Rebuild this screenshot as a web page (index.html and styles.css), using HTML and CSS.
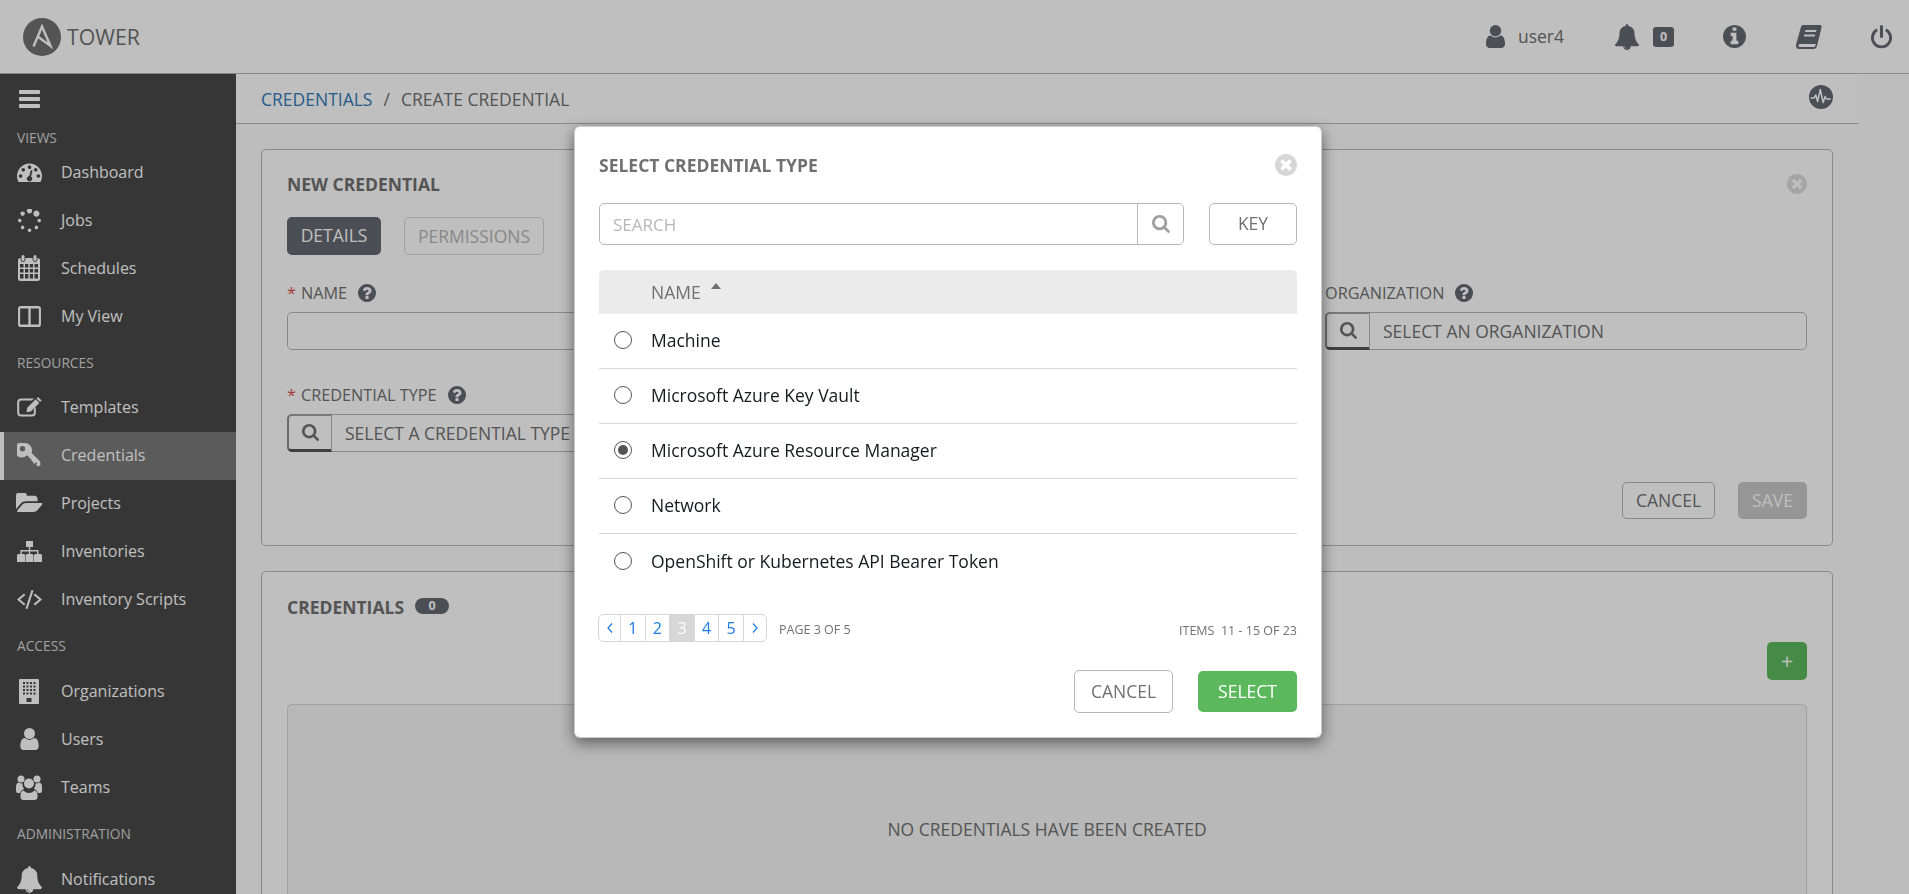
FILE: index.html
```html
<!DOCTYPE html>
<html lang="en">
<head>
<meta charset="utf-8">
<title>Tower - Create Credential</title>
<link rel="stylesheet" href="styles.css">
</head>
<body>
<svg class="sprite" aria-hidden="true">
  <symbol id="i-user" viewBox="256 128 1280 1536"><path d="M1536 1399q0 109-62.500 187t-150.500 78h-854q-88 0-150.500-78t-62.500-187q0-85 8.500-160.500t31.500-152 58.500-131 94-89 134.500-34.500q131 128 313 128t313-128q76 0 134.500 34.500t94 89 58.500 131 31.500 152 8.500 160.500zm-256-887q0 159-112.500 271.500t-271.500 112.500-271.500-112.500-112.500-271.500 112.500-271.500 271.500-112.500 271.500 112.500 112.500 271.500z"/></symbol>
  <symbol id="i-bell" viewBox="0 0 1792 1792"><path d="M912 1696q0-16-16-16-59 0-101.500-42.500t-42.500-101.500q0-16-16-16t-16 16q0 73 51.500 124.500t124.500 51.500q16 0 16-16zm816-288q0 52-38 90t-90 38h-448q0 106-75 181t-181 75-181-75-75-181h-448q-52 0-90-38t-38-90q50-42 91-88t85-119.500 74.500-158.500 50-206 19.500-260q0-152 117-282.500t307-158.500q-8-19-8-39 0-40 28-68t68-28 68 28 28 68q0 20-8 39 190 28 307 158.500t117 282.500q0 139 19.500 260t50 206 74.500 158.500 85 119.500 91 88z"/></symbol>
  <symbol id="i-search" viewBox="64 128 1664 1664"><path d="M1216 832q0-185-131.500-316.500t-316.500-131.500-316.500 131.500-131.500 316.500 131.500 316.500 316.500 131.500 316.500-131.500 131.500-316.500zm512 832q0 52-38 90t-90 38q-54 0-90-38l-343-342q-179 124-399 124-143 0-273.500-55.500t-225-150-150-225-55.500-273.500 55.500-273.500 150-225 225-150 273.500-55.500 273.500 55.500 225 150 150 225 55.500 273.500q0 220-124 399l343 343q37 37 37 90z"/></symbol>
  <symbol id="i-info" viewBox="128 128 1536 1536"><path d="M1152 1376v-160q0-14-9-23t-23-9h-96v-512q0-14-9-23t-23-9h-320q-14 0-23 9t-9 23v160q0 14 9 23t23 9h96v320h-96q-14 0-23 9t-9 23v160q0 14 9 23t23 9h448q14 0 23-9t9-23zm-128-896v-160q0-14-9-23t-23-9h-192q-14 0-23 9t-9 23v160q0 14 9 23t23 9h192q14 0 23-9t9-23zm640 416q0 209-103 385.500t-279.500 279.500-385.500 103-385.500-103-279.500-279.500-103-385.500 103-385.500 279.500-279.500 385.500-103 385.500 103 279.500 279.500 103 385.500z"/></symbol>
  <symbol id="i-help" viewBox="128 128 1536 1536"><path d="M1024 1376v-192q0-14-9-23t-23-9h-192q-14 0-23 9t-9 23v192q0 14 9 23t23 9h192q14 0 23-9t9-23zm256-672q0-88-55.500-163t-138.500-116-170-41q-243 0-371 213-15 24 8 42l132 100q7 6 19 6 16 0 25-12 53-68 86-92 34-24 86-24 48 0 85.500 26t37.500 59q0 38-20 61t-68 45q-63 28-115.500 86.500t-52.500 125.500v36q0 14 9 23t23 9h192q14 0 23-9t9-23q0-19 21.500-49.500t54.500-49.500q32-18 49-28.500t46-35 44.500-48 28-60.500 12.500-81zm384 192q0 209-103 385.500t-279.500 279.500-385.500 103-385.500-103-279.500-279.500-103-385.500 103-385.500 279.500-279.500 385.500-103 385.500 103 279.500 279.500 103 385.500z"/></symbol>
  <symbol id="i-close" viewBox="128 128 1536 1536"><path d="M1277 1122q0-26-19-45l-181-181 181-181q19-19 19-45 0-27-19-46l-90-90q-19-19-46-19-26 0-45 19l-181 181-181-181q-19-19-45-19-27 0-46 19l-90 90q-19 19-19 46 0 26 19 45l181 181-181 181q-19 19-19 45 0 27 19 46l90 90q19 19 46 19 26 0 45-19l181-181 181 181q19 19 45 19 27 0 46-19l90-90q19-19 19-46zm387-226q0 209-103 385.500t-279.500 279.500-385.500 103-385.500-103-279.500-279.500-103-385.500 103-385.500 279.500-279.500 385.500-103 385.500 103 279.500 279.500 103 385.500z"/></symbol>
  <symbol id="i-dash" viewBox="0 256 1792 1280"><path d="M384 1152q0-53-37.500-90.500t-90.500-37.500-90.500 37.500-37.500 90.500 37.500 90.500 90.500 37.500 90.500-37.500 37.500-90.500zm192-448q0-53-37.500-90.500t-90.500-37.500-90.500 37.500-37.500 90.500 37.500 90.500 90.500 37.500 90.500-37.500 37.500-90.500zm428 481l101-382q6-26-7.500-48.500t-38.500-29.500-48 6.500-30 39.500l-101 382q-60 5-107 43.500t-63 98.500q-20 77 20 146t117 89 146-20 89-117q16-60-6-117t-72-91zm660-33q0-53-37.500-90.500t-90.500-37.500-90.500 37.500-37.500 90.500 37.500 90.500 90.500 37.500 90.500-37.500 37.500-90.500zm-640-640q0-53-37.500-90.500t-90.500-37.500-90.500 37.500-37.500 90.500 37.500 90.500 90.500 37.500 90.500-37.500 37.500-90.500zm448 192q0-53-37.500-90.500t-90.500-37.500-90.500 37.500-37.500 90.500 37.500 90.500 90.500 37.500 90.500-37.500 37.500-90.500zm320 448q0 261-141 483-19 29-54 29h-1402q-35 0-54-29-141-221-141-483 0-182 71-348t191-286 286-191 348-71 348 71 286 191 191 286 71 348z"/></symbol>
  <symbol id="i-jobs" viewBox="64 64 1664 1664"><path d="M526 1394q0 53-37.500 90.500t-90.500 37.500q-52 0-90-38t-38-90q0-53 37.500-90.500t90.500-37.500 90.500 37.500 37.500 90.500zm498 206q0 53-37.500 90.500t-90.500 37.500-90.500-37.500-37.500-90.500 37.500-90.500 90.500-37.500 90.500 37.500 37.500 90.500zm-704-704q0 53-37.500 90.500t-90.500 37.500-90.500-37.500-37.500-90.500 37.500-90.500 90.500-37.500 90.500 37.500 37.500 90.500zm1202 498q0 52-38 90t-90 38q-53 0-90.500-37.500t-37.500-90.500 37.500-90.500 90.500-37.500 90.500 37.500 37.500 90.500zm-964-996q0 66-47 113t-113 47-113-47-47-113 47-113 113-47 113 47 47 113zm1170 498q0 53-37.500 90.500t-90.500 37.500-90.500-37.500-37.500-90.500 37.500-90.500 90.500-37.500 90.500 37.500 37.500 90.500zm-640-704q0 80-56 136t-136 56-136-56-56-136 56-136 136-56 136 56 56 136zm530 206q0 93-66 158.500t-158 65.500q-93 0-158.500-65.500t-65.500-158.500q0-92 65.500-158t158.500-66q92 0 158 66t66 158z"/></symbol>
  <symbol id="i-folder" viewBox="0 192 1920 1408"><path d="M1879 952q0 31-31 66l-336 396q-43 51-120.500 86.500t-143.500 35.500h-1088q-34 0-60.500-13t-26.500-43q0-31 31-66l336-396q43-51 120.500-86.500t143.500-35.500h1088q34 0 60.500 13t26.500 43zm-343-344v160h-832q-94 0-197 47.500t-164 119.500l-337 396-5 6q0-4-.5-12.500t-.5-12.500v-960q0-92 66-158t158-66h320q92 0 158 66t66 158v32h544q92 0 158 66t66 158z"/></symbol>
  <symbol id="i-cal" viewBox="0 0 24 26"><path fill-rule="evenodd" d="M6 0a1.500 1.500 0 0 1 1.500 1.500v3a1.500 1.500 0 0 1-3 0v-3A1.500 1.500 0 0 1 6 0zm12 0a1.500 1.500 0 0 1 1.500 1.500v3a1.500 1.500 0 0 1-3 0v-3A1.500 1.500 0 0 1 18 0zM3.500 3H3.600v1.500a2.400 2.400 0 0 0 4.800 0V3h7.200v1.500a2.400 2.400 0 0 0 4.800 0V3h.1A2.500 2.500 0 0 1 23 5.500v18a2.500 2.500 0 0 1-2.500 2.500h-17A2.500 2.500 0 0 1 1 23.500v-18A2.500 2.500 0 0 1 3.500 3zM3 9v3.500h3.500V9zm5 0v3.500h3.300V9zm4.800 0v3.500h3.300V9zm4.700 0v3.500H21V9zM3 14v3.500h3.500V14zm5 0v3.500h3.300V14zm4.800 0v3.500h3.300V14zm4.700 0v3.500H21V14zM3 19v4.500h3.500V19zm5 0v4.500h3.300V19zm4.800 0v4.500h3.300V19zm4.700 0v4.500H21V19z"/></symbol>
  <symbol id="i-cols" viewBox="0 0 24 22"><path fill-rule="evenodd" d="M3 0h18a3 3 0 0 1 3 3v16a3 3 0 0 1-3 3H3a3 3 0 0 1-3-3V3a3 3 0 0 1 3-3zm-.2 2.600A.6.6 0 0 0 2.200 3.200v15.600a.6.600 0 0 0 .6.6h8V2.600zm10.400 0v16.800h8a.6.600 0 0 0 .6-.6V3.200a.6.600 0 0 0-.6-.6z"/></symbol>
  <symbol id="i-edit" viewBox="0 0 25 20"><path d="M4 1.500h13l-2 2H4A1.800 1.800 0 0 0 2.200 5.300v10.400A1.800 1.800 0 0 0 4 17.500h11a1.800 1.800 0 0 0 1.800-1.800V12l2-2v5.700a3.800 3.800 0 0 1-3.800 3.800H4a3.800 3.800 0 0 1-3.800-3.800V5.300A3.800 3.800 0 0 1 4 1.500z"/><path d="M21 0l3.600 3.600-1.500 1.500-3.600-3.600zM18.700 2.300l3.600 3.600-8.500 8.500-4.300.8.700-4.400z"/></symbol>
  <symbol id="i-key" viewBox="0 0 24 24"><path fill-rule="evenodd" d="M7.500 0a7.500 7.500 0 0 1 6.800 4.300A7.400 7.400 0 0 1 14.600 10l8.600 8.600.3 3.200-1.300 1.300-1.500.2-1.600-1.600 1.200-2-1.500-.3-1 1.400-1.600-.5.200-1.500-1.700-.5-.2-1.600-4.400-4.400A7.500 7.500 0 1 1 7.500 0zM5.500 3a2.700 2.700 0 1 0 0 5.400 2.700 2.700 0 0 0 0-5.400z"/></symbol>
  <symbol id="i-site" viewBox="0 0 25 21"><path d="M9 0h7v6h-7zM11.800 6h1.400v3h8.300v4h-1.400v-2.600h-6.900V13h-1.400v-2.600H4.900V13H3.500V9h8.300zM0 14.500A1.500 1.500 0 0 1 1.500 13h5.500A1.500 1.500 0 0 1 8 14.500V21H0zm8.500 0A1.500 1.500 0 0 1 10 13h5a1.500 1.500 0 0 1 1.500 1.500V21h-8zm8.500 0a1.500 1.500 0 0 1 1.500-1.500h5A1.500 1.500 0 0 1 25 14.500V21h-8z"/></symbol>
  <symbol id="i-code" viewBox="0 0 25 19"><path d="M7 3.500L8.400 5 3 9.500 8.400 14 7 15.500 0 9.500zM18 3.500l7 6-7 6L16.600 14 22 9.500 16.600 5zM14.500 0l2 .5L10.500 19l-2-.5z"/></symbol>
  <symbol id="i-org" viewBox="0 0 20 25"><path fill-rule="evenodd" d="M1 0h18a1 1 0 0 1 1 1v23a1 1 0 0 1-1 1H1a1 1 0 0 1-1-1V1a1 1 0 0 1 1-1zm3 3v2h2V3zm3.500 0v2h2V3zm3.500 0v2h2V3zm3.500 0v2h2V3zM4 6.500v2h2v-2zm3.500 0v2h2v-2zm3.500 0v2h2v-2zm3.500 0v2h2v-2zM4 10v2h2v-2zm3.500 0v2h2v-2zm3.500 0v2h2v-2zm3.500 0v2h2v-2zM4 13.500v2h2v-2zm3.500 0v2h2v-2zm3.500 0v2h2v-2zm3.500 0v2h2v-2zM7.500 19v4h5v-4z"/></symbol>
  <symbol id="i-users" viewBox="0 0 26 25"><circle cx="13" cy="8.500" r="5"/><circle cx="5" cy="4" r="3.500"/><circle cx="21" cy="4" r="3.500"/><path d="M7.500 15.500q2.500 2.500 5.500 2.500t5.500-2.500q3 .5 3 5V22q0 3-3 3h-11q-3 0-3-3v-1.500q0-4.500 3-5z"/><path d="M0 12q0-4 2.500-4.500 1.500 1 4 1-.5 3 1.500 5.500-3 1-4 4H2q-2 0-2-2zM26 12q0-4-2.500-4.500-1.500 1-4 1 .5 3-1.500 5.500 3 1 4 4h2q2 0 2-2z"/></symbol>
  <symbol id="i-book" viewBox="0 0 26 24"><path fill-rule="evenodd" d="M7 0h17q2 0 1.500 2.500L21 21q-.8 3-3.500 3H3Q0 24 0 20.500q0-1 .3-2L5 2Q5.500 0 7 0zm2.500 5L9 7h11l.5-2zM8.300 9.500l-.5 2h11l.5-2zM4 19q-1.500 0-1.500 1.500T4 22h13.500q1.500 0 2-1.500l.5-1.500z"/></symbol>
</svg>

<header class="topbar">
  <div class="brand">
    <svg class="brand-logo" viewBox="0 0 38 38"><circle cx="19" cy="19" r="19"/><path class="brand-a" d="M10.500 28.500L19 8.500l8.500 19.500L15 18.800"/></svg>
    <span class="brand-name">TOWER</span>
  </div>
  <nav class="topnav">
    <span class="topnav-user"><svg class="ti ti-user"><use href="#i-user"/></svg><span class="user-name">user4</span></span>
    <span class="topnav-bell"><svg class="ti ti-bell"><use href="#i-bell"/></svg><span class="count count-top">0</span></span>
    <svg class="ti ti-info"><use href="#i-info"/></svg>
    <svg class="ti ti-book"><use href="#i-book"/></svg>
    <svg class="ti ti-power" viewBox="0 0 24 25"><path d="M7.500 5a9.500 9.500 0 1 0 9 0" fill="none" stroke="currentColor" stroke-width="3"/><path d="M12 1.600v10.400" stroke="currentColor" stroke-width="3.200" stroke-linecap="round" fill="none"/></svg>
  </nav>
</header>

<div class="shell">
  <aside class="sidebar">
    <div class="burger"><span></span><span></span><span></span></div>
    <div class="side-label side-label-first">VIEWS</div>
    <a class="side-item"><span class="side-icon"><svg class="si si-dash"><use href="#i-dash"/></svg></span>Dashboard</a>
    <a class="side-item"><span class="side-icon"><svg class="si si-jobs"><use href="#i-jobs"/></svg></span>Jobs</a>
    <a class="side-item"><span class="side-icon"><svg class="si si-cal"><use href="#i-cal"/></svg></span>Schedules</a>
    <a class="side-item"><span class="side-icon"><svg class="si si-cols"><use href="#i-cols"/></svg></span>My View</a>
    <div class="side-label side-label-res">RESOURCES</div>
    <a class="side-item"><span class="side-icon"><svg class="si si-edit"><use href="#i-edit"/></svg></span>Templates</a>
    <a class="side-item side-item-active"><span class="side-icon"><svg class="si si-key"><use href="#i-key"/></svg></span>Credentials</a>
    <a class="side-item"><span class="side-icon"><svg class="si si-folder"><use href="#i-folder"/></svg></span>Projects</a>
    <a class="side-item"><span class="side-icon"><svg class="si si-site"><use href="#i-site"/></svg></span>Inventories</a>
    <a class="side-item"><span class="side-icon"><svg class="si si-code"><use href="#i-code"/></svg></span>Inventory Scripts</a>
    <div class="side-label">ACCESS</div>
    <a class="side-item"><span class="side-icon"><svg class="si si-org"><use href="#i-org"/></svg></span>Organizations</a>
    <a class="side-item"><span class="side-icon"><svg class="si si-user"><use href="#i-user"/></svg></span>Users</a>
    <a class="side-item"><span class="side-icon"><svg class="si si-users"><use href="#i-users"/></svg></span>Teams</a>
    <div class="side-label">ADMINISTRATION</div>
    <a class="side-item"><span class="side-icon"><svg class="si si-bell"><use href="#i-bell"/></svg></span>Notifications</a>
  </aside>

  <main class="main">
    <div class="crumbs">
      <div class="crumb-path"><a class="crumb-link">CREDENTIALS</a><span class="crumb-sep">/</span><span>CREATE CREDENTIAL</span></div>
      <svg class="pulse" viewBox="0 0 24 24"><circle cx="12" cy="12" r="12"/><path d="M1.500 13h3.500l1.800-3 1.800 6.500 2.700-12 2.800 13 2-6 1.300 2.500h4.300" fill="none" stroke="#fff" stroke-width="1.500" stroke-linejoin="round"/></svg>
    </div>
    <div class="content">
      <section class="card card-form">
        <div class="card-head">
          <h2 class="card-title">NEW CREDENTIAL</h2>
          <svg class="x-icon"><use href="#i-close"/></svg>
        </div>
        <div class="tabs">
          <span class="tab tab-on">DETAILS</span>
          <span class="tab tab-off">PERMISSIONS</span>
        </div>
        <div class="fields">
          <div class="field">
            <label class="field-label"><span class="req">*</span> NAME <svg class="help"><use href="#i-help"/></svg></label>
            <div class="input"></div>
          </div>
          <div class="field"></div>
          <div class="field">
            <label class="field-label">ORGANIZATION <svg class="help"><use href="#i-help"/></svg></label>
            <div class="lookup"><span class="lookup-btn"><svg class="lookup-icon"><use href="#i-search"/></svg></span><span class="lookup-text">SELECT AN ORGANIZATION</span></div>
          </div>
          <div class="field">
            <label class="field-label"><span class="req">*</span> CREDENTIAL TYPE <svg class="help"><use href="#i-help"/></svg></label>
            <div class="lookup"><span class="lookup-btn"><svg class="lookup-icon"><use href="#i-search"/></svg></span><span class="lookup-text">SELECT A CREDENTIAL TYPE</span></div>
          </div>
        </div>
        <div class="form-actions">
          <span class="btn btn-plain">CANCEL</span>
          <span class="btn btn-save">SAVE</span>
        </div>
      </section>

      <section class="card card-list">
        <div class="list-title"><h2 class="card-title">CREDENTIALS</h2><span class="count count-list">0</span></div>
        <div class="list-tools"><span class="btn-add">+</span></div>
        <div class="empty">NO CREDENTIALS HAVE BEEN CREATED</div>
      </section>
    </div>
  </main>
</div>

<div class="backdrop">
  <div class="modal">
    <div class="modal-head">
      <h2 class="modal-title">SELECT CREDENTIAL TYPE</h2>
      <svg class="modal-x"><use href="#i-close"/></svg>
    </div>
    <div class="search-row">
      <div class="search"><span class="search-ph">SEARCH</span><span class="search-btn"><svg class="search-icon"><use href="#i-search"/></svg></span></div>
      <span class="btn-key">KEY</span>
    </div>
    <div class="thead"><span>NAME</span><i class="caret"></i></div>
    <div class="row"><i class="radio"></i>Machine</div>
    <div class="row"><i class="radio"></i>Microsoft Azure Key Vault</div>
    <div class="row"><i class="radio radio-on"></i>Microsoft Azure Resource Manager</div>
    <div class="row"><i class="radio"></i>Network</div>
    <div class="row row-last"><i class="radio"></i>OpenShift or Kubernetes API Bearer Token</div>
    <div class="pager-row">
      <div class="pager-left">
        <div class="pager">
          <span class="pg pg-arrow"><svg viewBox="0 0 8 12" class="chev"><path d="M6 1.500L2 6l4 4.500"/></svg></span>
          <span class="pg">1</span><span class="pg">2</span><span class="pg pg-on">3</span><span class="pg">4</span><span class="pg">5</span>
          <span class="pg pg-arrow"><svg viewBox="0 0 8 12" class="chev"><path d="M2 1.500L6 6l-4 4.500"/></svg></span>
        </div>
        <span class="pager-note">PAGE 3 OF 5</span>
      </div>
      <span class="items-note">ITEMS&nbsp; 11 - 15 OF 23</span>
    </div>
    <div class="modal-actions">
      <span class="btn-cancel">CANCEL</span>
      <span class="btn-select">SELECT</span>
    </div>
  </div>
</div>
</body>
</html>
```

FILE: styles.css
```css
* { box-sizing: border-box; }
html, body { margin: 0; height: 100%; }
body {
  height: 894px;
  overflow: hidden;
  background: #fcfcfc;
  font-family: "Open Sans", "Noto Sans", sans-serif;
  font-size: 17.5px;
  color: #707070;
}
.sprite { display: none; }
svg { fill: currentColor; display: block; }

.topbar {
  height: 74px;
  background: #fff;
  border-bottom: 1px solid #b7b7b7;
  display: flex;
  align-items: center;
  justify-content: space-between;
  padding: 0 16px 0 23px;
}
.brand { display: flex; align-items: center; gap: 6px; }
.brand-logo { width: 38px; height: 38px; color: #707070; }
.brand-a { fill: none; stroke: #fff; stroke-width: 2.4; stroke-linejoin: miter; }
.brand-name { font-size: 21.3px; color: #707070; line-height: 1; }
.topnav { display: flex; align-items: center; color: #646972; }
.topnav-user { display: flex; align-items: center; gap: 13px; color: #707070; margin-right: 50px; }
.user-name { padding-bottom: 2px; }
.topnav-bell { display: flex; align-items: center; gap: 13px; margin-right: 49px; }
.ti { color: #646972; }
.ti-user { width: 19px; height: 23px; }
.ti-bell { width: 26px; height: 26px; }
.ti-info { width: 23px; height: 23px; margin-right: 50px; }
.ti-book { width: 26px; height: 24px; margin-right: 48px; }
.ti-power { width: 23px; height: 24px; }
.count {
  background: #646972;
  color: #fff;
  font-weight: 700;
  border-radius: 3px;
  text-align: center;
}
.count-top { width: 21px; height: 20px; font-size: 12.5px; line-height: 20px; }

.shell { display: flex; height: 820px; }
.sidebar { width: 236px; flex: none; background: #484848; color: #fff; overflow: hidden; font-size: 16px; }
.burger { height: 54px; padding: 16px 0 0 19px; }
.burger span { display: block; width: 21px; height: 4px; background: #fff; margin-bottom: 3px; border-radius: 1px; }
.side-label { height: 44px; padding: 12px 0 12px 17px; font-size: 13.75px; line-height: 20px; color: #d7d7d7; }
.side-label-first { height: 20px; padding: 0 0 0 17px; }
.side-label-res { padding: 13px 0 11px 17px; }
.side-item { display: flex; align-items: center; height: 48px; padding-left: 17px; }
.side-label:not(.side-label-first) ~ .side-item { padding-bottom: 2px; }
.side-item-active { background: #7a7a7a; border-left: 4px solid #fff; }
.side-label:not(.side-label-first) ~ .side-item-active { padding-left: 13px; }
.side-icon { width: 44px; flex: none; display: flex; justify-content: flex-start; }
.si { color: #fff; }
.si-dash { width: 25px; height: 19px; }
.si-jobs { width: 23px; height: 23px; margin-left: 1px; }
.si-cal { width: 24px; height: 26px; }
.si-cols { width: 23px; height: 21px; margin-left: 1px; }
.si-edit { width: 25px; height: 20px; }
.si-key { width: 24px; height: 24px; }
.si-folder { width: 27px; height: 20px; margin-left: -1px; }
.si-site { width: 25px; height: 21px; }
.si-code { width: 25px; height: 19px; }
.si-org { width: 20px; height: 25px; margin-left: 2px; }
.si-user { width: 19px; height: 22px; margin-left: 3px; }
.si-users { width: 26px; height: 25px; margin-left: -1px; }
.si-bell { width: 27px; height: 27px; margin-left: -1px; }

.main { width: 1622px; flex: none; }
.crumbs {
  height: 50px;
  background: #fff;
  border-bottom: 1px solid #b7b7b7;
  padding: 0 25px;
  display: flex;
  align-items: center;
  justify-content: space-between;
}
.crumb-path { display: flex; gap: 11px; margin-top: 1px; }
.crumb-link { color: #337ab7; }
.pulse { width: 24px; height: 24px; margin-bottom: 3px; color: #646972; }
.content { padding: 25px 25px 0; }
.card { background: #fff; border: 1px solid #b7b7b7; border-radius: 5px; padding: 0 25px; }
.card-form { height: 397px; padding-top: 23px; }
.card-head { display: flex; justify-content: space-between; align-items: center; height: 22px; }
.card-title { margin: 0; font-size: 17.5px; font-weight: 700; line-height: 22px; color: #707070; }
.x-icon { width: 20px; height: 20px; color: #dcdcdc; }
.tabs { display: flex; gap: 23px; margin-top: 22px; }
.tab { height: 38px; border-radius: 5px; line-height: 37px; text-align: center; }
.tab-on { width: 94px; background: #646972; color: #fff; }
.tab-off { width: 140px; border: 1px solid #d7d7d7; color: #b7b7b7; }
.fields { display: grid; grid-template-columns: repeat(3, 482px); column-gap: 37px; row-gap: 33px; margin-top: 26px; }
.field-label { display: flex; align-items: center; height: 24px; margin-bottom: 7px; gap: 5px; white-space: nowrap; font-size: 16.25px; }
.req { color: #d9534f; }
.help { width: 18px; height: 18px; margin-left: 6px; color: #646972; }
.input { height: 38px; border: 1px solid #b7b7b7; border-radius: 5px; }
.lookup { height: 38px; border: 1px solid #b7b7b7; border-radius: 5px; display: flex; align-items: stretch; }
.lookup-btn {
  width: 45px;
  background: #fff;
  border: 2px solid #8e8e8e;
  border-top-color: #a0a0a0;
  border-right: 1px solid #b7b7b7;
  border-bottom: 3px solid #555;
  border-radius: 5px 0 0 5px;
  margin: -1px 0 -1px -1px;
  display: flex;
  align-items: center;
  justify-content: center;
}
.lookup-icon { width: 17px; height: 17px; color: #707070; }
.lookup-text { padding-left: 13px; line-height: 36px; white-space: nowrap; }
.form-actions { display: flex; justify-content: flex-end; gap: 23px; margin-top: 30px; }
.btn { height: 37px; line-height: 35px; text-align: center; border-radius: 5px; }
.btn-plain { width: 93px; border: 1px solid #b7b7b7; }
.btn-save { width: 69px; background: #c8c8c8; color: #fff; line-height: 37px; }

.card-list { margin-top: 25px; height: 400px; padding-top: 24px; }
.list-title { display: flex; align-items: center; gap: 11px; }
.count-list { width: 34px; height: 16px; border-radius: 8px; font-size: 12.5px; line-height: 16px; margin-bottom: 2px; }
.list-tools { display: flex; justify-content: flex-end; margin-top: 24px; }
.btn-add {
  width: 40px;
  height: 38px;
  border-radius: 5px;
  background: #5cb85c;
  color: #fff;
  font-size: 22px;
  line-height: 37px;
  text-align: center;
}
.empty {
  margin-top: 24px;
  height: 300px;
  background: #f6f6f6;
  border: 1px solid #d7d7d7;
  border-radius: 5px;
  padding-top: 112px;
  text-align: center;
  line-height: 24px;
}

.backdrop {
  position: fixed;
  inset: 0;
  background: rgba(0, 0, 0, 0.25);
  display: flex;
  justify-content: center;
  align-items: flex-start;
  padding: 126px 13px 0 0;
}
.modal {
  width: 748px;
  height: 612px;
  background: #fff;
  border: 1px solid rgba(0, 0, 0, 0.2);
  border-radius: 6px;
  box-shadow: 0 5px 15px rgba(0, 0, 0, 0.5);
  padding: 0 24px;
  display: flex;
  flex-direction: column;
}
.modal-head { display: flex; justify-content: space-between; align-items: center; height: 22px; margin-top: 27px; }
.modal-title { margin: 0; font-size: 17.5px; font-weight: 700; color: #707070; line-height: 22px; }
.modal-x { width: 22px; height: 22px; color: #d7d7d7; }
.search-row { display: flex; justify-content: space-between; margin-top: 27px; }
.search {
  width: 585px;
  height: 42px;
  border: 1px solid #b7b7b7;
  border-radius: 5px;
  display: flex;
  align-items: center;
  justify-content: space-between;
  padding-left: 13px;
}
.search-ph { color: #b7b7b7; font-size: 17px; }
.search-btn { width: 46px; height: 40px; border-left: 1px solid #b7b7b7; display: flex; align-items: center; justify-content: center; }
.search-icon { width: 18px; height: 18px; color: #a0a0a0; }
.btn-key {
  width: 88px;
  height: 42px;
  border: 1px solid #b7b7b7;
  border-radius: 5px;
  text-align: center;
  line-height: 38px;
}
.thead {
  height: 44px;
  margin-top: 25px;
  background: #ebebeb;
  border-radius: 5px 5px 0 0;
  display: flex;
  align-items: center;
  padding-left: 52px;
  gap: 10px;
}
.caret { width: 0; height: 0; border: 5.5px solid transparent; border-top: 0; border-bottom: 6px solid #707070; margin-bottom: 12px; }
.row {
  height: 55px;
  border-bottom: 1px solid #d7d7d7;
  display: flex;
  align-items: center;
  color: #161b1f;
  padding-left: 15px;
  padding-bottom: 2px;
}
.row-last { border-bottom: 0; }
.radio {
  width: 18px;
  height: 18px;
  border: 1px solid #555;
  border-radius: 50%;
  margin-right: 19px;
  flex: none;
  display: flex;
  align-items: center;
  justify-content: center;
}
.radio-on::before { content: ""; width: 10px; height: 10px; border-radius: 50%; background: #555; }
.pager-row { display: flex; justify-content: space-between; align-items: center; margin: 25px 0 0 -1px; height: 28px; }
.pager-left { display: flex; align-items: center; gap: 12px; }
.pager { display: flex; height: 28px; border: 1px solid #d7d7d7; border-radius: 5px; overflow: hidden; }
.pg {
  width: 24.6px;
  border-right: 1px solid #d7d7d7;
  color: #1c7ce0;
  font-size: 16px;
  display: flex;
  align-items: center;
  justify-content: center;
}
.pg:last-child { border-right: 0; }
.pg-arrow { width: 22px; }
.pg-on { background: #d7d7d7; color: #fff; }
.chev { width: 8px; height: 12px; fill: none; stroke: #1c7ce0; stroke-width: 1.2; }
.pager-note { font-size: 12.5px; color: #707070; margin-top: 2px; }
.items-note { font-size: 12.5px; color: #707070; margin-top: 4px; }
.modal-actions { display: flex; justify-content: flex-end; gap: 25px; margin-top: 28px; }
.btn-cancel {
  width: 99px;
  height: 43px;
  border: 1px solid #b7b7b7;
  border-radius: 5px;
  text-align: center;
  line-height: 41px;
}
.btn-select {
  width: 99px;
  height: 41px;
  margin-top: 1px;
  background: #5cb85c;
  color: #fff;
  border-radius: 5px;
  text-align: center;
  line-height: 41px;
}
```
